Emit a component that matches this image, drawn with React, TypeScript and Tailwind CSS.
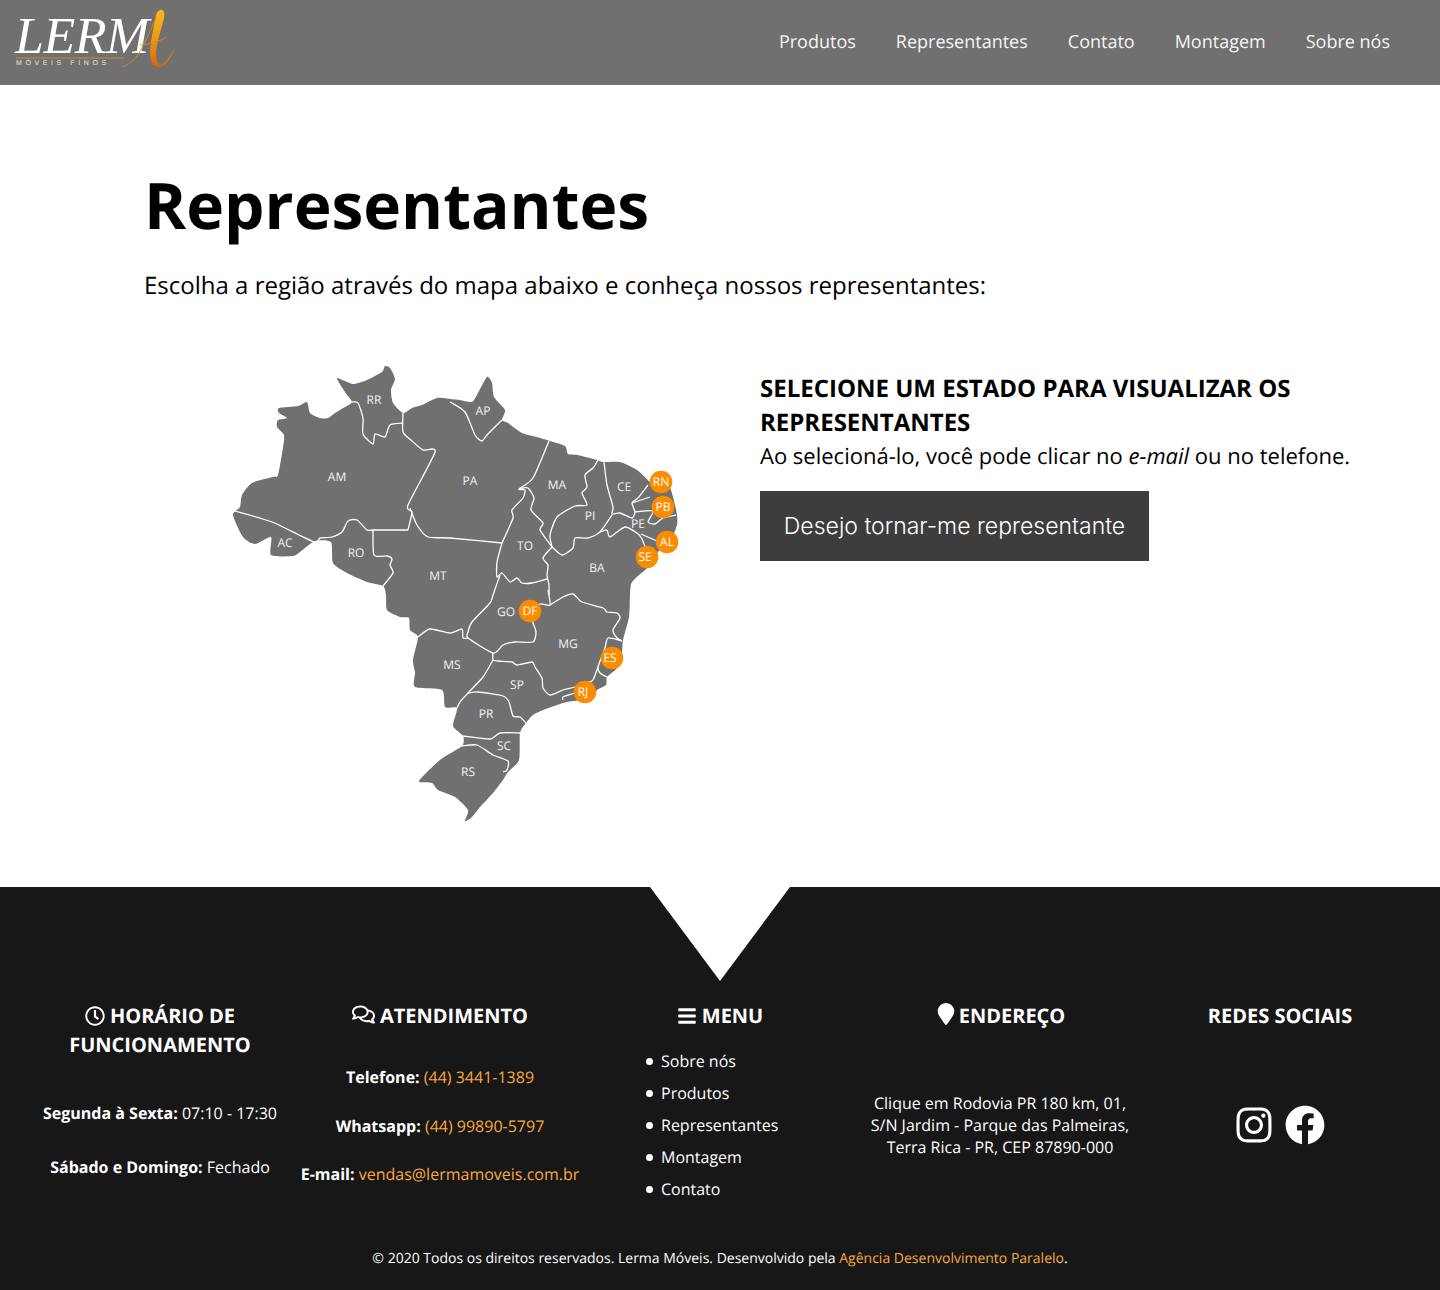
import { FaBars, FaFacebook, FaInstagram, FaMapMarker, FaRegClock, FaRegComments } from "react-icons/fa";

const outline =
  "M279 408 L298 406 L307 402 L310 413 L320 418 L328 418 L335 413 L345 407 L352 402 L345 392 L337 378 L353 384 L367 380 L382 372 L385 366 L390 368 L395 379 L391 390 L393 403 L403 413 L412 408 L422 405 L437 398 L450 399 L460 400 L472 402 L478 393 L487 377 L492 383 L494 397 L505 410 L502 420 L508 423 L522 433 L537 437 L550 441 L565 446 L568 454 L578 455 L597 460 L603 462 L620 462 L637 470 L650 482 L662 490 L670 488 L675 505 L677 515 L677 525 L670 542 L658 552 L647 568 L632 582 L630 595 L629 617 L623 640 L622 652 L617 668 L607 677 L606 685 L597 690 L592 697 L580 700 L567 702 L557 705 L543 710 L533 715 L526 723 L520 733 L519 760 L508 772 L503 780 L493 793 L480 807 L472 817 L465 821 L468 810 L455 797 L438 790 L432 783 L419 781 L440 760 L462 746 L463 736 L453 726 L457 708 L445 707 L442 690 L415 687 L415 673 L413 660 L418 637 L410 630 L409 618 L400 617 L387 610 L386 595 L383 586 L367 582 L347 573 L333 563 L331 542 L315 541 L300 552 L293 556 L271 555 L271 537 L255 544 L243 537 L233 515 L240 507 L242 495 L252 483 L273 477 L278 475 L283 448 L284 435 L277 427 L278 420 L287 418 L279 413 Z";

const borders = [
  "M235 511 L272 522 L314 542 L320 538 L332 537 L342 532 L348 521 L357 520 L367 530 L373 530 L408 530",
  "M373 530 L374 555 L387 556 L392 559 L390 565 L393 573 L383 586",
  "M408 530 L412 512 L408 505 L435 452 L423 450 L412 441 L403 432 L403 413",
  "M352 402 L358 403 L363 418 L363 434 L373 444 L375 434 L385 437 L390 425 L403 423",
  "M410 508 L417 525 L428 537 L450 538 L502 543",
  "M450 402 L465 412 L475 435 L482 441 L487 435 L502 420",
  "M502 543 L513 518 L512 510 L523 498 L525 490 L519 489 L533 478 L549 441",
  "M519 489 L528 488 L534 498 L531 510 L543 523 L540 530 L552 547",
  "M598 460 L593 468 L585 475 L587 487 L582 493 L587 505 L575 506 L557 517 L550 535 L552 547",
  "M552 547 L543 558 L548 565 L547 575 L549 585 L549 595",
  "M502 543 L497 562 L497 577 L502 573 L510 582 L517 578 L522 583 L532 583 L547 579",
  "M500 575 L493 595 L490 603 L472 622 L468 632 L468 638 L493 653 L503 645 L515 642 L533 642 L536 632 L533 623 L530 611",
  "M418 637 L430 629 L450 633 L462 629 L463 638 L468 638",
  "M530 611 L540 604 L550 605 L548 590",
  "M550 605 L563 597 L573 594 L582 602 L603 608 L607 612 L617 613 L620 618 L613 630 L617 638 L622 641",
  "M622 641 L608 638 L605 648 L598 667 L600 673 L607 677",
  "M598 667 L593 680 L587 683 L575 687 L563 690 L550 695 L543 688 L542 678 L535 667 L532 662 L517 665 L512 662 L498 661 L493 660 L493 653",
  "M493 660 L483 677 L468 693 L460 702 L457 708",
  "M468 693 L478 692 L503 696 L509 702 L513 716 L520 717 L526 723",
  "M563 700 L563 697 L575 693",
  "M463 736 L490 739 L500 733 L520 733",
  "M462 746 L477 745 L493 755 L508 761 L507 770 L503 772",
  "M604 462 L607 485 L613 507 L612 514 L620 513 L632 518 L635 512 L632 503 L638 498 L648 485",
  "M552 547 L562 555 L573 548 L575 538 L588 538 L600 532 L612 515",
  "M600 532 L607 530 L610 537 L625 527 L637 533 L642 539 L647 552",
  "M632 503 L650 497",
  "M635 512 L653 511 L648 522 L655 524 L663 518 L676 515",
  "M641 534 L657 541 L662 541",
];

const labels = [
  ["RR", 374, 404], ["AP", 483, 415], ["AM", 337, 481], ["PA", 470, 485], ["MA", 557, 489],
  ["PI", 590, 520], ["CE", 624, 491], ["PE", 638, 528], ["TO", 525, 550], ["BA", 597, 572],
  ["AC", 285, 547], ["RO", 356, 557], ["MT", 438, 580], ["GO", 506, 616], ["MG", 568, 648],
  ["MS", 452, 669], ["SP", 517, 689], ["PR", 486, 718], ["SC", 504, 750], ["RS", 468, 776],
] as const;

const pins = [
  ["RN", 661, 482, 0], ["PB", 663, 507, 0], ["AL", 667, 542, 0], ["SE", 647, 557, -2],
  ["DF", 530, 611, 0], ["ES", 612, 658, -2], ["RJ", 585, 692, -2],
] as const;

// suaviza as polilinhas dos estados (catmull-rom -> bezier)
function smooth(d: string) {
  const closed = d.trim().endsWith("Z");
  const nums = d.match(/-?\d+(\.\d+)?/g)!.map(Number);
  const pts: [number, number][] = [];
  for (let i = 0; i < nums.length; i += 2) pts.push([nums[i], nums[i + 1]]);
  const n = pts.length;
  const at = (i: number) => (closed ? pts[(i + n) % n] : pts[Math.max(0, Math.min(n - 1, i))]);
  const k = 0.11;
  let out = `M${pts[0][0]} ${pts[0][1]}`;
  const segs = closed ? n : n - 1;
  for (let i = 0; i < segs; i++) {
    const [p0, p1, p2, p3] = [at(i - 1), at(i), at(i + 1), at(i + 2)];
    const c1x = p1[0] + (p2[0] - p0[0]) * k;
    const c1y = p1[1] + (p2[1] - p0[1]) * k;
    const c2x = p2[0] - (p3[0] - p1[0]) * k;
    const c2y = p2[1] - (p3[1] - p1[1]) * k;
    out += ` C${c1x.toFixed(1)} ${c1y.toFixed(1)} ${c2x.toFixed(1)} ${c2y.toFixed(1)} ${p2[0]} ${p2[1]}`;
  }
  return closed ? out + " Z" : out;
}

function BrazilMap() {
  return (
    <svg viewBox="220 355 470 475" className="h-[475px] w-[470px]">
      <path d={smooth(outline)} fill="#707070" />
      {borders.map((d) => (
        <path key={d} d={smooth(d)} fill="none" stroke="#ffffff" strokeWidth="1.3" strokeLinejoin="round" />
      ))}
      {labels.map(([name, x, y]) => (
        <text key={name} x={x} y={y} fill="#f2f2f2" fontSize="12" textAnchor="middle">
          {name}
        </text>
      ))}
      {pins.map(([name, x, y, dx]) => (
        <g key={name}>
          <circle cx={x} cy={y} r="11.3" fill="#fb8c00" />
          <text x={x + dx} y={y + 4} fill="#ffffff" fontSize="12" textAnchor="middle">
            {name}
          </text>
        </g>
      ))}
    </svg>
  );
}

function Logo() {
  return (
    <div className="relative h-[85px] w-[200px]">
      <span className="absolute left-[15px] top-[7px] font-['Liberation_Serif',serif] text-[52px] italic leading-[60px] tracking-[-0.5px] text-white">
        LERM
      </span>
      <svg viewBox="0 0 200 85" className="absolute left-0 top-0 h-[85px] w-[200px]">
        <defs>
          <linearGradient id="logoA" x1="0" y1="0" x2="0" y2="1">
            <stop offset="0" stopColor="#fdb813" />
            <stop offset="0.5" stopColor="#ee9a12" />
            <stop offset="1" stopColor="#d4650f" />
          </linearGradient>
        </defs>
        <path
          d="M160 10 C164 9 165 13 164 18 C161 30 157 42 156 52 C156 60 158 64 161 65 C166 62 171 55 175 47 C172 56 166 66 160 67 C154 68 150 62 150 54 C150 42 155 22 156 15 C157 12 158 11 160 10 Z"
          fill="url(#logoA)"
        />
        <path d="M156 18 C150 32 145 42 138 55 C133 61 128 65 122 67" fill="none" stroke="#d98a1f" strokeWidth="0.9" />
        <path d="M140 45 C150 44 160 41 167 37" fill="none" stroke="#d98a1f" strokeWidth="0.9" />
        <path d="M16 58 H124" stroke="#b5813f" strokeWidth="1.5" />
      </svg>
      <span className="absolute left-[16px] top-[60px] font-['Liberation_Sans',sans-serif] text-[7px] leading-[8px] tracking-[3.6px] text-[#e6e6e6]">
        MÓVEIS FINOS
      </span>
    </div>
  );
}

const nav = ["Produtos", "Representantes", "Contato", "Montagem", "Sobre nós"];
const menu = ["Sobre nós", "Produtos", "Representantes", "Montagem", "Contato"];

export default function App() {
  return (
    <div className="min-h-[1290px] bg-white font-['Open_Sans',sans-serif] text-black [text-rendering:geometricPrecision]">
      {/* NAV */}
      <header className="flex h-[85px] items-center justify-between bg-[#707070]">
        <Logo />
        <nav className="flex gap-[40px] pr-[50px] text-[18px] text-[#f5f5f5]">
          {nav.map((n) => (
            <a key={n}>{n}</a>
          ))}
        </nav>
      </header>

      {/* CONTEUDO */}
      <main className="h-[802px] pl-[144px]">
        <h1 className="pt-[79px] text-[64px] font-bold leading-[82px]">Representantes</h1>
        <p className="mt-[20px] text-[24px] leading-[40px]">
          Escolha a região através do mapa abaixo e conheça nossos representantes:
        </p>
        <div className="mt-[49px] flex">
          <div className="w-[616px] pl-[76px]">
            <BrazilMap />
          </div>
          <div className="pt-[17px]">
            <h2 className="w-[620px] text-[24px] font-bold leading-[34px]">
              SELECIONE UM ESTADO PARA VISUALIZAR OS REPRESENTANTES
            </h2>
            <p className="text-[22px] leading-[32px]">
              Ao selecioná-lo, você pode clicar no <em>e-mail</em> ou no telefone.
            </p>
            <button className="mt-[19px] h-[70px] w-[389px] bg-[#3d3d3d] font-['Inter',sans-serif] text-[23px] font-light text-white">
              Desejo tornar-me representante
            </button>
          </div>
        </div>
      </main>

      {/* RODAPE */}
      <footer className="h-[403px] bg-[#171717] text-white">
        <div className="flex h-[94px] justify-center">
          <div className="h-0 w-0 border-x-[70px] border-t-[94px] border-x-transparent border-t-white" />
        </div>
        <div className="grid grid-cols-5 px-[20px] pt-[20px] text-center text-[16px]">
          <div>
            <h3 className="px-[30px] text-[20px] font-bold leading-[29px]">
              <FaRegClock className="mr-[5px] inline-block align-[-3px]" />
              HORÁRIO DE FUNCIONAMENTO
            </h3>
            <p className="mt-[42px] leading-[24px]">
              <strong>Segunda à Sexta:</strong> 07:10 - 17:30
            </p>
            <p className="mt-[30px] leading-[24px]">
              <strong>Sábado e Domingo:</strong> Fechado
            </p>
          </div>
          <div>
            <h3 className="text-[20px] font-bold leading-[29px]">
              <FaRegComments className="mr-[5px] inline-block align-[-3px] text-[23px]" />
              ATENDIMENTO
            </h3>
            <p className="mt-[35px] leading-[24px]">
              <strong>Telefone:</strong> <a className="text-[#f9a93f]">(44) 3441-1389</a>
            </p>
            <p className="mt-[25px] leading-[24px]">
              <strong>Whatsapp:</strong> <a className="text-[#f9a93f]">(44) 99890-5797</a>
            </p>
            <p className="mt-[24px] leading-[24px]">
              <strong>E-mail:</strong> <a className="text-[#f9a93f]">vendas@lermamoveis.com.br</a>
            </p>
          </div>
          <div>
            <h3 className="text-[20px] font-bold leading-[29px]">
              <FaBars className="mr-[5px] inline-block align-[-3px]" />
              MENU
            </h3>
            <ul className="mt-[15px] pl-[66px] text-left">
              {menu.map((m) => (
                <li key={m} className="flex h-[32px] items-center gap-[8px]">
                  <span className="h-[7px] w-[7px] rounded-full bg-white" />
                  {m}
                </li>
              ))}
            </ul>
          </div>
          <div>
            <h3 className="text-[20px] font-bold leading-[29px]">
              <FaMapMarker className="mr-[2px] inline-block align-[-2px] text-[22px]" />
              ENDEREÇO
            </h3>
            <p className="mt-[62px] leading-[22px]">
              Clique em Rodovia PR 180 km, 01,
              <br />
              S/N Jardim - Parque das Palmeiras,
              <br />
              Terra Rica - PR, CEP 87890-000
            </p>
          </div>
          <div>
            <h3 className="text-[20px] font-bold leading-[29px]">REDES SOCIAIS</h3>
            <div className="mt-[75px] flex items-center justify-center gap-[11px] pr-[2px] text-[40px]">
              <FaInstagram />
              <FaFacebook />
            </div>
          </div>
        </div>
        <p className="mt-[44px] text-center text-[14px] leading-[20px]">
          © 2020 Todos os direitos reservados. Lerma Móveis. Desenvolvido pela{" "}
          <a className="text-[#f9a93f]">Agência Desenvolvimento Paralelo</a>.
        </p>
      </footer>
    </div>
  );
}
